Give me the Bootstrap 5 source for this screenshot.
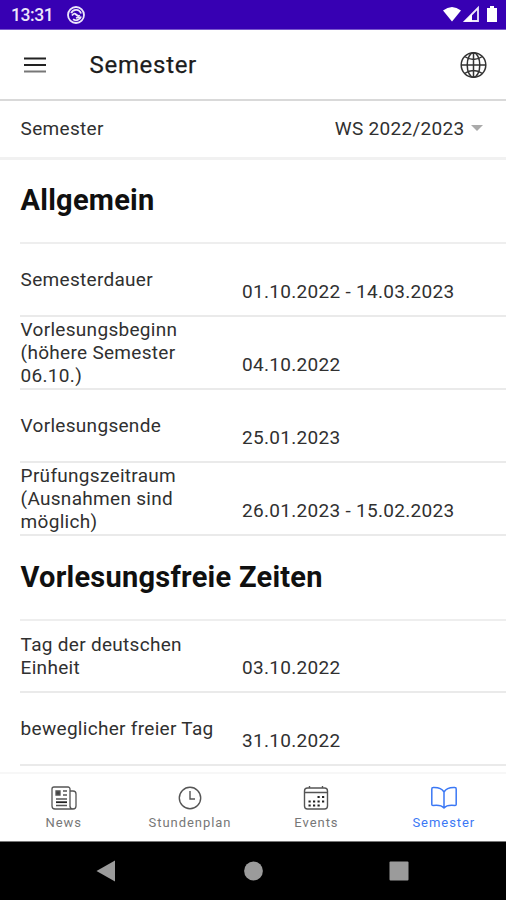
<!DOCTYPE html>
<html lang="de">
<head>
<meta charset="utf-8">
<meta name="viewport" content="width=device-width, initial-scale=1">
<title>Semester</title>
<link href="https://cdn.jsdelivr.net/npm/bootstrap@5.3.0/dist/css/bootstrap.min.css" rel="stylesheet">
<style>
body{font-family:Roboto,"Liberation Sans",sans-serif;color:#303030;font-size:19px;line-height:23px;letter-spacing:.3px;background:#fff}
.screen{height:900px}
.status-bar{height:30px;background:#3700b3;border-bottom:1px solid #7a58cc;padding:1px 8px 0 11px}
.clock-text{font-size:17.5px;letter-spacing:-.4px;line-height:28px;width:55px;font-weight:500;color:#ece6fa}
.app-bar{height:71px;padding:0 18px 0 23px;border-bottom:2px solid #d9d9d9}
.app-title{font-size:24px;line-height:30px;letter-spacing:.7px;font-weight:400;-webkit-text-stroke:.25px #1c1c1c;margin:0 0 0 42.500px;color:#1c1c1c}
.picker{height:59px;padding:0 23px 2px 20.600px;border-bottom:3px solid #f1f1f1}
.caret{width:0;height:0;border:6px solid transparent;border-top-color:#aaa;border-bottom:0;margin-left:6.500px}
.content-area{padding-left:20px}
.section-title{font-size:29px;line-height:34px;font-weight:700;letter-spacing:.25px;color:#101010;height:84px;padding:23.400px 0 0 .5px;border-bottom:2px solid #eee}
.entry{height:73px;border-bottom:2px solid #eaeaea}
.entry + .section-title{height:85px;padding-top:24px}
.entry + .section-title + .entry{height:72px;padding-bottom:1px}
.entry-label{width:201px;padding-left:.6px}
.entry-value{margin:24px 0 0 21px}
.tabs-bar{height:69px;border-top:2px solid #f7f7f7;background:#fff;padding-left:.5px}
.tab{width:126.7px;font-size:13px;line-height:16px;letter-spacing:.95px;color:#777;padding-top:11px}
.tab svg{margin-bottom:4px}
.tab.current{color:#3b78f5;padding-left:2px}
.system-bar{height:59px;background:#000;padding:0 97px 1px 96px;border-top:1px solid #777}
</style>
<script src="https://cdn.jsdelivr.net/npm/bootstrap@5.3.0/dist/js/bootstrap.bundle.min.js"></script>
</head>
<body>
<div class="screen d-flex flex-column overflow-hidden">
  <div class="status-bar d-flex align-items-center flex-shrink-0">
    <span class="clock-text">13:31</span>
    <svg width="20" height="20" viewBox="0 0 20 20" fill="none" stroke="#ece6fa"><circle cx="10" cy="10" r="8" stroke-width="1.8"/><path d="M5.2 8.2A5.2 5.2 0 0 1 15 8.5M15 11.5A5.2 5.2 0 0 1 7 14.3M6 10.5q2-3 4-1t4 1M10 13l3.500-1" stroke-width="1.8"/></svg>
    <svg class="ms-auto" width="56" height="20" viewBox="0 0 56 20"><path d="M1 5.500Q10-1.500 19 5.500L10 16.500Z" fill="#fff"/><path d="M36 3V16H23Z" fill="none" stroke="#eee8fb" stroke-width="1.800"/><path d="M22 16.500 30 9V16.500Z" fill="#fff"/><path d="M45 3h3V1h4v2h3v14H45Z" fill="#fff"/></svg>
  </div>
  <header class="app-bar d-flex align-items-center flex-shrink-0">
    <svg width="24" height="20" viewBox="0 0 24 20" fill="none" stroke="#222" stroke-width="2"><path d="M1 3.500H23M1 10H23"/><path d="M1 16.500H23" stroke="#777"/></svg>
    <h1 class="app-title">Semester</h1>
    <svg class="ms-auto" width="28" height="28" viewBox="0 0 28 28" fill="none" stroke="#333" stroke-width="1.500"><circle cx="13.500" cy="14" r="12.300"/><ellipse cx="13.500" cy="14" rx="6.300" ry="12.300"/><path d="M13.500 1.700V26.300M1.200 14H25.800M4.500 5.500Q13.500 11.500 22.500 5.500M4.500 22.500Q13.500 16.500 22.500 22.500"/></svg>
  </header>
  <div class="picker d-flex align-items-center flex-shrink-0">
    <span>Semester</span><span class="ms-auto">WS 2022/2023</span><span class="caret"></span>
  </div>
  <main class="content-area flex-grow-1 overflow-hidden">
    <h2 class="section-title mb-0">Allgemein</h2>
    <div class="entry d-flex align-items-center"><div class="entry-label">Semesterdauer</div><div class="entry-value">01.10.2022 - 14.03.2023</div></div>
    <div class="entry d-flex align-items-center"><div class="entry-label">Vorlesungsbeginn<br>(höhere Semester<br>06.10.)</div><div class="entry-value">04.10.2022</div></div>
    <div class="entry d-flex align-items-center"><div class="entry-label">Vorlesungsende</div><div class="entry-value">25.01.2023</div></div>
    <div class="entry d-flex align-items-center"><div class="entry-label">Prüfungszeitraum<br>(Ausnahmen sind<br>möglich)</div><div class="entry-value">26.01.2023 - 15.02.2023</div></div>
    <h2 class="section-title mb-0">Vorlesungsfreie Zeiten</h2>
    <div class="entry d-flex align-items-center"><div class="entry-label">Tag der deutschen<br>Einheit</div><div class="entry-value">03.10.2022</div></div>
    <div class="entry d-flex align-items-center"><div class="entry-label">beweglicher freier Tag</div><div class="entry-value">31.10.2022</div></div>
  </main>
  <nav class="tabs-bar d-flex flex-shrink-0">
    <div class="tab d-flex flex-column align-items-center"><svg width="26" height="26" viewBox="0 0 26 26" fill="none" stroke="#555" stroke-width="1.300"><path d="M19 22V4a2 2 0 0 0-2-2H3a2 2 0 0 0-2 2v17a3 3 0 0 0 3 3h18a3 3 0 0 1-3-3V6h3a3 3 0 0 1 3 3v12a3 3 0 0 1-3 3"/><path d="M12 6h4M12 10h4M5 14h11M5 20.500h11"/><path d="M5 17.200h11" stroke="#222" stroke-width="1.800"/><path d="M5 6h4v4H5z" fill="#444"/></svg>News</div>
    <div class="tab d-flex flex-column align-items-center"><svg width="26" height="26" viewBox="0 0 26 26" fill="none" stroke="#555" stroke-width="1.400"><circle cx="13" cy="13" r="10.700"/><path d="M13 6v8h5"/></svg>Stundenplan</div>
    <div class="tab d-flex flex-column align-items-center"><svg width="26" height="26" viewBox="0 0 26 26" fill="none" stroke="#555" stroke-width="1.400"><rect x="1.500" y="3" width="23" height="21" rx="3"/><path d="M1.500 7.500h23M6.500 1v2M19.500 1v2"/><path d="M14.500 12h2.200M19 12h2.200M5.500 16.500h2.200M10 16.500h2.200M14.500 16.500h2.200M19 16.500h2.200M5.500 20.500h2.200M10 20.500h2.200M14.500 20.500h2.200" stroke="#222" stroke-width="2.200"/></svg>Events</div>
    <div class="tab current d-flex flex-column align-items-center"><svg width="28" height="26" viewBox="0 0 28 26" fill="none" stroke="currentColor" stroke-width="1.500" stroke-linejoin="round"><path d="M14 7Q11 2 3 2.500Q1.800 2.500 1.800 4V19.500Q1.800 20.500 3 20.500Q11 19.500 14 23Q17 19.500 25 20.500Q26.200 20.500 26.200 19.500V4Q26.200 2.500 25 2.500Q17 2 14 7ZV23"/></svg>Semester</div>
  </nav>
  <div class="system-bar d-flex align-items-center justify-content-between flex-shrink-0">
    <svg width="19" height="22" viewBox="0 0 19 22"><path d="M19 .5V21.500L.5 11Z" fill="#9b9b9b"/></svg>
    <svg width="22" height="20" viewBox="0 0 22 20"><circle cx="12.500" cy="10" r="9.400" fill="#9b9b9b"/></svg>
    <svg width="20" height="20" viewBox="0 0 20 20"><rect x=".5" y=".5" width="19" height="19" rx="1" fill="#9b9b9b"/></svg>
  </div>
</div>
</body>
</html>
